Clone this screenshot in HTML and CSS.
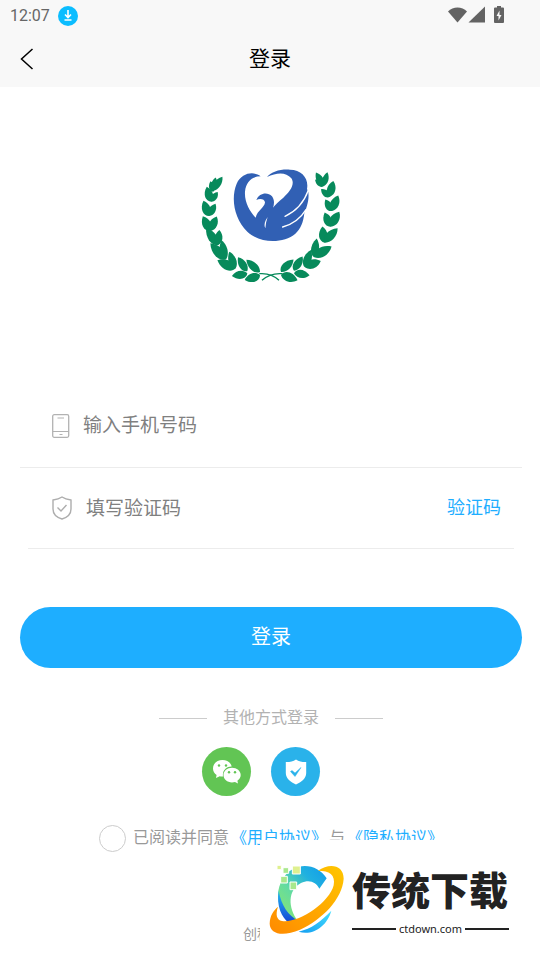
FILE: index.html
```html
<!DOCTYPE html>
<html lang="zh-CN">

<head>
<meta charset="utf-8">
<meta name="viewport" content="width=device-width, initial-scale=1">
<title>登录</title>
<link rel="stylesheet" href="styles.css">
</head>

<body>

<div class="statusBar">
    <span class="clock">12:07</span>
    <svg class="download" width="20" height="20" viewBox="0 0 20 20">
        <circle cx="10" cy="10" r="10" fill="#0bbdff"/>
        <path d="M10 4v7M7 8.500l3 3 3-3M6.500 14h7" fill="none" stroke="#fff" stroke-width="1.600"/>
    </svg>
    <svg class="signals" width="58" height="20" viewBox="0 0 58 20" fill="#636363">
        <path d="M0 5.500C5 0 14 0 19 5.500L9.500 16.500Z"/>
        <path d="M20.500 16.500L37 .5v16z"/>
        <path d="M46 2.500a1 1 0 0 1 1-1h2V0h4v1.500h2a1 1 0 0 1 1 1V16a1 1 0 0 1-1 1h-8a1 1 0 0 1-1-1z"/>
        <path d="M51.500 4.500L48.500 10h2v4.500l3-5.500h-2z" fill="#f8f8f8"/>
    </svg>
</div>

<header class="titleBar">
    <a class="back" href="#" aria-label="返回">
        <svg width="14" height="22" viewBox="0 0 14 22"><path d="M12.500 1L1.500 11l11 10" fill="none" stroke="#000" stroke-width="1.500"/></svg>
    </a>
    <h1>登录</h1>
</header>

<main class="login">

    <svg class="logo" width="162" height="130" viewBox="0 0 486 390">
        <defs>
            <path id="leaf" d="M0 0C6-18 32-20 50 0C34 17 10 15 0 0z"/>
        </defs>
        <g fill="#078a5b">
            <use href="#leaf" transform="translate(70 95) rotate(-105) scale(.65)"/>
            <use href="#leaf" transform="translate(70 92) rotate(-57) scale(1 .8)"/>
            <use href="#leaf" transform="translate(70 92) rotate(-80) scale(.8 .7)"/>
            <use href="#leaf" transform="translate(64 125) rotate(-107) scale(.94)"/>
            <use href="#leaf" transform="translate(64 125) rotate(-57) scale(.7)"/>
            <use href="#leaf" transform="translate(58 168) rotate(-111) scale(.98)"/>
            <use href="#leaf" transform="translate(58 168) rotate(-63) scale(.82)"/>
            <use href="#leaf" transform="translate(62 213) rotate(-118) scale(1)"/>
            <use href="#leaf" transform="translate(62 213) rotate(-67) scale(.94)"/>
            <use href="#leaf" transform="translate(85 255) rotate(-126) scale(1.240 1)"/>
            <use href="#leaf" transform="translate(85 255) rotate(-86) scale(.9)"/>
            <use href="#leaf" transform="translate(108 298) rotate(-134) scale(1.350 1.100)"/>
            <use href="#leaf" transform="translate(108 298) rotate(-103) scale(1.180 .9)"/>
            <use href="#leaf" transform="translate(137 325) rotate(-156) scale(1.200 1.100)"/>
            <use href="#leaf" transform="translate(137 325) rotate(-111) scale(1.060 .9)"/>
            <use href="#leaf" transform="translate(172 333) rotate(-124) scale(1 .9)"/>
            <use href="#leaf" transform="translate(172 340) rotate(170) scale(.94)"/>
            <use href="#leaf" transform="translate(210 336) rotate(-138) scale(1.100 .9)"/>
            <use href="#leaf" transform="translate(210 345) rotate(162) scale(.96 1)"/>

            <use href="#leaf" transform="translate(402 78) rotate(-121) scale(.94 .8)"/>
            <use href="#leaf" transform="translate(402 78) rotate(-76) scale(.85 .7)"/>
            <use href="#leaf" transform="translate(402 78) rotate(-145) scale(.65)"/>
            <use href="#leaf" transform="translate(420 110) rotate(-140) scale(.7)"/>
            <use href="#leaf" transform="translate(420 110) rotate(-78) scale(.96)"/>
            <use href="#leaf" transform="translate(426 153) rotate(-120) scale(.8)"/>
            <use href="#leaf" transform="translate(426 153) rotate(-68) scale(1)"/>
            <use href="#leaf" transform="translate(422 200) rotate(-113) scale(.92)"/>
            <use href="#leaf" transform="translate(422 200) rotate(-60) scale(1.040)"/>
            <use href="#leaf" transform="translate(404 248) rotate(-98) scale(.98)"/>
            <use href="#leaf" transform="translate(404 248) rotate(-48) scale(1.160 1)"/>
            <use href="#leaf" transform="translate(373 292) rotate(-83) scale(1.140 .9)"/>
            <use href="#leaf" transform="translate(373 292) rotate(-32) scale(1.220 1.100)"/>
            <use href="#leaf" transform="translate(345 322) rotate(-71) scale(1.100 .9)"/>
            <use href="#leaf" transform="translate(345 322) rotate(-22) scale(1.020)"/>
            <use href="#leaf" transform="translate(312 332) rotate(-59) scale(1 .9)"/>
            <use href="#leaf" transform="translate(312 340) rotate(7) scale(.94)"/>
            <use href="#leaf" transform="translate(273 336) rotate(-45) scale(1.060 .9)"/>
            <use href="#leaf" transform="translate(273 345) rotate(18) scale(1.040)"/>
        </g>
        <path d="M208 341C232 339 252 346 267 361M277 341C252 339 232 346 216 361" fill="none" stroke="#078a5b" stroke-width="4"/>
        <g transform="translate(120 15)">
            <path fill="#3160b4" d="M92 34C72 18 36 22 20 56C2 100 12 160 52 200C90 236 160 236 196 206C212 192 220 172 223 144C230 128 238 104 235 82L231 72C237 40 215 14 180 14C150 12 125 20 111 36C140 22 168 20 184 40C196 58 180 80 160 98C136 118 110 140 106 190C100 178 106 164 118 150C132 130 137 108 126 94C112 80 88 84 79 105C90 99 104 102 105 112C104 128 82 136 77 158C58 138 43 110 45 80C48 50 66 34 92 34z"/>
            <path fill="none" stroke="#fff" stroke-width="4" stroke-linecap="round" d="M165 154C196 140 222 112 235 76M158 186C188 178 212 160 228 134"/>
        </g>
    </svg>

    <form class="loginForm">
        <div class="row phoneRow">
            <label for="phone" aria-label="手机号码">
                <svg width="18" height="24" viewBox="0 0 18 24" fill="none" stroke="#b2b2b2">
                    <rect x=".7" y=".7" width="16" height="22.600" rx="1.500" stroke-width="1.300"/>
                    <path d="M5.500 4h6.500M1 17.500h16M7.500 20.500h3"/>
                </svg>
            </label>
            <input id="phone" type="tel" placeholder="输入手机号码">
        </div>
        <div class="row codeRow">
            <label for="code" aria-label="验证码">
                <svg width="20" height="24" viewBox="0 0 20 24" fill="none" stroke="#adadad" stroke-width="1.400">
                    <path d="M10 1C7 3 4 3.600 1 4v9c0 5 4 8.500 9 10 5-1.500 9-5 9-10V4C16 3.600 13 3 10 1z"/>
                    <path d="M5.500 11.500l3.500 3.500 5.500-6"/>
                </svg>
            </label>
            <input id="code" type="text" placeholder="填写验证码">
            <button class="getCode" type="button">验证码</button>
        </div>
        <button class="submit" type="submit">登录</button>
    </form>

    <div class="otherTitle">其他方式登录</div>
    <div class="otherLogin">
        <button type="button" class="wechat" aria-label="微信登录">
            <svg width="30" height="26" viewBox="0 0 30 26" fill="#fff">
                <path d="M10.500 1C5 1 1 4.700 1 9.500c0 2.700 1.400 5 3.600 6.500L4 19l3.700-1.700c1 .2 2 .3 3.300.2C10 11 15 7.200 19.700 7.500 19 3.700 15 1 10.500 1z"/>
                <path d="M20 8.700c-4.800 0-8.500 3.200-8.500 7.300s3.700 7.400 8.500 7.400c1 0 2-.2 3-.5l3 1.600-.6-2.800c2-1.400 3.300-3.400 3.300-5.700 0-4.100-3.900-7.300-8.700-7.300z"/>
                <g fill="#62c554"><circle cx="7" cy="6.500" r="1.200"/><circle cx="14" cy="6.500" r="1.200"/><circle cx="17" cy="13.300" r="1.200"/><circle cx="23" cy="13.300" r="1.200"/></g>
            </svg>
        </button>
        <button type="button" class="shield" aria-label="安全登录">
            <svg width="22" height="26" viewBox="0 0 22 26">
                <path d="M11 .5C8 2.500 4 3.200.8 3v11c0 5.500 5 9 10.200 11.500C16.200 23 21.200 19.500 21.200 14V3C18 3.200 14 2.500 11 .5z" fill="#fff"/>
                <path d="M5.500 12.500l1.500-1 3 2.500L16 8.500 10 17.500z" fill="#2ab2ea" stroke="#2ab2ea" stroke-width=".5"/>
            </svg>
        </button>
    </div>

    <div class="agreement">
        <input id="agree" type="checkbox">
        <div class="terms">
            <label for="agree">已阅读并同意</label>
            <a href="#">《用户协议》</a>
            <span>与</span>
            <a href="#">《隐私协议》</a>
        </div>
    </div>
</main>

<footer class="company">创科</footer>

<div class="brand">
    <svg width="90" height="84" viewBox="0 0 270 252">
        <defs>
            <linearGradient id="cTop" x1="0" y1="1" x2="1" y2="0">
                <stop offset="0" stop-color="#8fe86a"/>
                <stop offset=".4" stop-color="#63dba0"/>
                <stop offset=".7" stop-color="#20b1e0"/>
                <stop offset="1" stop-color="#129bea"/>
            </linearGradient>
            <linearGradient id="cSide" x1="0" y1="0" x2="0" y2="1">
                <stop offset="0" stop-color="#22b8f5"/>
                <stop offset="1" stop-color="#1646d2"/>
            </linearGradient>
            <linearGradient id="cEnd" x1="0" y1="1" x2="1" y2="0">
                <stop offset="0" stop-color="#149df0"/>
                <stop offset="1" stop-color="#45dfff"/>
            </linearGradient>
            <linearGradient id="ring" x1="0" y1="1" x2="1" y2="0">
                <stop offset="0" stop-color="#ff8a00"/>
                <stop offset="1" stop-color="#ffc600"/>
            </linearGradient>
        </defs>
        <path fill="url(#cTop)" d="M182 61C160 26 118 14 82 32C48 50 32 90 37 125C45 165 70 185 96 189C65 150 65 95 105 75C130 63 150 72 160 92z"/>
        <path fill="url(#cSide)" d="M38 98C30 145 48 178 68 194L98 188C66 173 46 142 38 98z"/>
        <path fill="url(#cEnd)" d="M196 158C184 204 140 235 98 221C137 211 163 192 196 158z"/>
        <path fill="url(#ring)" d="M156 38C190 14 233 20 233 62C229 122 170 184 102 215C50 237 12 228 11 197C12 172 22 158 36 146C28 170 32 185 48 189C96 197 190 135 203 82C209 50 190 38 156 38z"/>
        <g stroke="#fff" stroke-width="3">
            <path d="M79 24h24v24H79zM33 22h13v13H33z" fill="#dff08f"/>
            <path d="M51 29h17v17H51zM44 55h20v20H44zM72 72h20v23H72z" fill="#a8e88c"/>
        </g>
    </svg>
    <div class="brandText">
        <strong>传统下载</strong>
        <span>ctdown.com</span>
    </div>
</div>

</body>

</html>
```
FILE: styles.css
```css
* {
    box-sizing: border-box;
}
body {
    margin: 0;
    min-height: 100vh;
    position: relative;
    background-color: #fff;
    color: #999;
    font-family: Roboto, "Noto Sans CJK SC", sans-serif;
    font-size: 16px;
}
a {
    color: #1eaeff;
    text-decoration: none;
}
button {
    border: 0;
    padding: 0;
    font: inherit;
    cursor: pointer;
}
svg {
    display: block;
}

/* top bars */
.statusBar {
    display: flex;
    align-items: center;
    height: 31px;
    padding: 0 34px 0 10px;
    background-color: #f8f8f8;
}
.clock {
    color: #666;
    font-size: 16px;
}
.download {
    margin-left: 8px;
}
.signals {
    margin-left: auto;
}
.titleBar {
    display: grid;
    grid-template-columns: 60px 1fr 60px;
    align-items: center;
    height: 56px;
    background-color: #f8f8f8;
}
.titleBar h1 {
    margin: 0;
    padding-bottom: 4px;
    color: #000;
    font-size: 21px;
    font-weight: normal;
    text-align: center;
}
.back {
    padding-left: 20px;
}

/* login */
.login {
    padding: 73px 18px 0 20px;
}
.logo {
    margin: 0 auto;
}
.loginForm {
    margin-top: 94px;
}
.row {
    display: flex;
    align-items: center;
    border-bottom: 1px solid #ececec;
}
.row input {
    flex: 1;
    min-width: 0;
    height: 32px;
    border: 0;
    padding: 0;
    outline: none;
    background: none;
    color: #333;
    font: inherit;
    font-size: 19px;
}
.row input::placeholder {
    color: #808080;
}
.phoneRow {
    gap: 13px;
    height: 84px;
    padding: 0 20px 0 32px;
}
.codeRow {
    gap: 14px;
    height: 81px;
    margin: 0 8px;
    padding: 0 13px 0 24px;
}
.getCode {
    padding-bottom: 4px;
    background: none;
    color: #1eaeff;
    font-size: 18px;
}
.submit {
    display: block;
    width: 100%;
    height: 61px;
    margin-top: 58px;
    padding-bottom: 4px;
    border-radius: 31px;
    background-color: #1eaeff;
    color: #fff;
    font-size: 20px;
}

/* other ways to log in */
.otherTitle {
    display: flex;
    justify-content: center;
    align-items: center;
    gap: 16px;
    margin-top: 38px;
    color: #b2b2b2;
    line-height: 24px;
}
.otherTitle::before,
.otherTitle::after {
    content: "";
    width: 48px;
    height: 1px;
    background-color: #ccc;
}
.otherLogin {
    display: flex;
    justify-content: center;
    gap: 20px;
    margin-top: 17px;
    padding-right: 20px;
}
.otherLogin button {
    display: grid;
    place-items: center;
    width: 49px;
    height: 49px;
    border-radius: 50%;
}
.otherLogin .wechat {
    background-color: #62c554;
}
.otherLogin .shield {
    background-color: #2ab2ea;
}
.agreement {
    display: flex;
    justify-content: center;
    align-items: center;
    gap: 7px;
    margin-top: 28px;
    white-space: nowrap;
}
.agreement input {
    appearance: none;
    width: 27px;
    height: 27px;
    margin: 0;
    border: 1px solid #ccc;
    border-radius: 50%;
}
.agreement input:checked {
    background-color: #1eaeff;
}
.terms {
    display: flex;
    gap: 2px;
    padding-bottom: 4px;
}
.company {
    width: 54px;
    margin: 71px auto 0;
    font-size: 14px;
    line-height: 22px;
}

/* site badge over the bottom corner */
.brand {
    position: absolute;
    right: 0;
    bottom: 0;
    display: flex;
    align-items: center;
    width: 280px;
    height: 120px;
    padding-left: 6px;
    background-color: #fff;
    color: #222;
}
.brandText {
    width: 157px;
    margin-left: -4px;
}
.brandText strong {
    display: block;
    padding-top: 2px;
    font-size: 39px;
    font-weight: 900;
    line-height: 56px;
    white-space: nowrap;
}
.brandText span {
    display: flex;
    align-items: center;
    gap: 3px;
    font-family: "Noto Sans", sans-serif;
    font-size: 11px;
    line-height: 18px;
}
.brandText span::before,
.brandText span::after {
    content: "";
    flex: 1;
    height: 2px;
    background-color: #222;
}
```
